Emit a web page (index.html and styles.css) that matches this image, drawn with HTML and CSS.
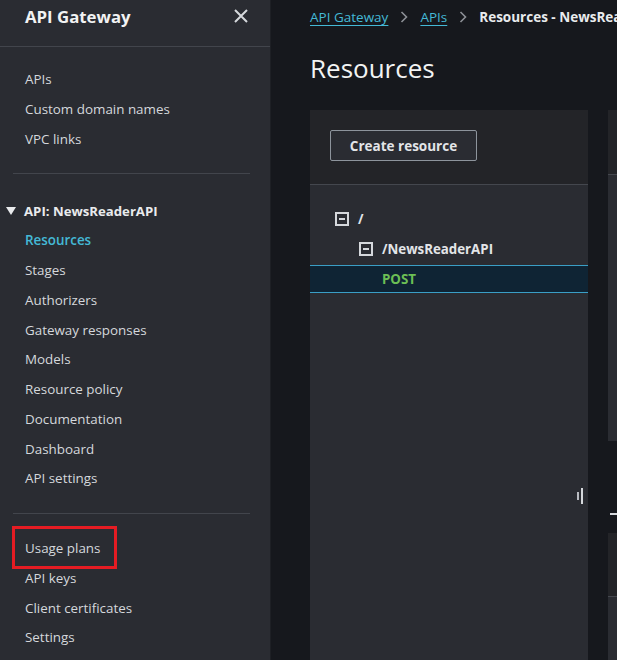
FILE: index.html
```html
<!DOCTYPE html>
<html>
<head>
<meta charset="utf-8">
<link rel="stylesheet" href="styles.css">
</head>
<body>
<aside class="sidebar">
  <div class="side-head">
    <span class="side-title">API Gateway</span>
    <svg class="close" width="14" height="14" viewBox="0 0 14 14"><path d="M1 1 L13 13 M13 1 L1 13" stroke="#d5d8dc" stroke-width="2" fill="none"/></svg>
  </div>
  <nav class="group first">
    <a class="item">APIs</a>
    <a class="item">Custom domain names</a>
    <a class="item">VPC links</a>
  </nav>
  <hr class="divider">
  <nav class="group api">
    <div class="api-title"><svg class="caret" width="10" height="8" viewBox="0 0 10 8"><path d="M0 0 H10 L5 8 Z" fill="#e9ebed"/></svg>API: NewsReaderAPI</div>
    <a class="item active">Resources</a>
    <a class="item">Stages</a>
    <a class="item">Authorizers</a>
    <a class="item">Gateway responses</a>
    <a class="item">Models</a>
    <a class="item">Resource policy</a>
    <a class="item">Documentation</a>
    <a class="item">Dashboard</a>
    <a class="item">API settings</a>
  </nav>
  <hr class="divider">
  <nav class="group last">
    <a class="item highlighted">Usage plans</a>
    <a class="item">API keys</a>
    <a class="item">Client certificates</a>
    <a class="item">Settings</a>
  </nav>
</aside>
<main class="main">
  <div class="crumbs">
    <a class="crumb-link">API Gateway</a>
    <svg class="chev" width="8" height="12" viewBox="0 0 8 12"><path d="M1.5 1 L6.5 6 L1.5 11" stroke="#8d9096" stroke-width="1.6" fill="none"/></svg>
    <a class="crumb-link">APIs</a>
    <svg class="chev" width="8" height="12" viewBox="0 0 8 12"><path d="M1.5 1 L6.5 6 L1.5 11" stroke="#8d9096" stroke-width="1.6" fill="none"/></svg>
    <span class="crumb-current">Resources - NewsReaderAPI</span>
  </div>
  <h1 class="title">Resources</h1>
  <div class="panels">
    <section class="panel tree-panel">
      <div class="panel-head">
        <button class="btn">Create resource</button>
      </div>
      <div class="tree">
        <div class="row lvl0"><span class="box"></span><span class="path">/</span></div>
        <div class="row lvl1"><span class="box"></span><span class="path">/NewsReaderAPI</span></div>
        <div class="row method selected"><span class="post">POST</span></div>
      </div>
      <div class="handle"><span class="h1"></span><span class="h2"></span></div>
    </section>
    <section class="right-col">
      <div class="panel details">
        <div class="details-head"></div>
      </div>
      <div class="tabs"><span class="tab-line"></span></div>
      <div class="panel lower">
        <div class="lower-head"></div>
      </div>
    </section>
  </div>
</main>
</body>
</html>
```
FILE: styles.css
```css
*, *::before, *::after { box-sizing: border-box; }
html, body { margin: 0; padding: 0; }
body {
  width: 617px;
  height: 660px;
  overflow: hidden;
  display: flex;
  background: #16181d;
  font-family: "Open Sans", "Noto Sans", sans-serif;
  color: #d5d8dc;
}
.sidebar {
  width: 271px;
  flex: none;
  background: #2a2c32;
  border-right: 1px solid #1e2025;
  display: flex;
  flex-direction: column;
}
.side-head {
  height: 47px;
  display: flex;
  align-items: center;
  justify-content: space-between;
  padding: 0 22px 0 25px;
  border-bottom: 1px solid #42454c;
}
.side-title {
  font-size: 16.8px;
  font-weight: 700;
  color: #f2f3f3;
  margin-top: -14px;
}
.close { margin-top: -14px; }
.group { display: flex; flex-direction: column; }
.item {
  display: block;
  height: 29.75px;
  line-height: 29.75px;
  padding-left: 25px;
  font-size: 13.4px;
  color: #d5d8dc;
}
.group.first { padding-top: 18px; padding-bottom: 19px; }
.divider {
  margin: 0 20px 0 13px;
  border: 0;
  border-top: 1px solid #42454c;
  height: 0;
}
.group.api { padding-top: 22px; padding-bottom: 19px; }
.api-title {
  height: 30px;
  line-height: 30px;
  font-size: 13.2px;
  font-weight: 700;
  color: #e9ebed;
  padding-left: 6px;
  display: flex;
  align-items: center;
}
.caret { margin-right: 8px; flex: none; }
.item.active { color: #44b9d6; font-weight: 600; }
.group.last { padding-top: 20px; }
.item.highlighted {
  position: relative;
}
.item.highlighted::after {
  content: "";
  position: absolute;
  left: 12px;
  top: -8px;
  width: 105px;
  height: 43px;
  border: 3px solid #e51c23;
}
.main {
  flex: 1;
  min-width: 0;
  padding-left: 39px;
  overflow: hidden;
}
.crumbs {
  height: 34px;
  display: flex;
  align-items: center;
  white-space: nowrap;
  font-size: 13.5px;
}
.crumb-link {
  color: #44b9d6;
  text-decoration: underline;
  text-underline-offset: 3px;
}
.chev { margin: 0 12px; flex: none; }
.crumb-current { font-weight: 700; color: #e9ebed; }
.title {
  margin: 0;
  height: 76px;
  padding-top: 16px;
  font-size: 26px;
  font-weight: 400;
  color: #f2f3f3;
  line-height: 36px;
}
.panels {
  display: flex;
  gap: 20px;
  width: 400px;
}
.panel { background: #2a2c32; }
.tree-panel {
  width: 278px;
  flex: none;
  height: 560px;
  position: relative;
}
.panel-head {
  height: 75px;
  background: #232428;
  border-bottom: 1px solid #44474e;
  padding: 20px 0 0 20px;
}
.btn {
  height: 31px;
  width: 147px;
  background: #2a2c32;
  border: 1.5px solid #8d949c;
  border-radius: 2px;
  color: #e3e5e8;
  font-family: "Open Sans", "Noto Sans", sans-serif;
  font-size: 13.5px;
  font-weight: 700;
  padding: 0;
}
.tree { padding-top: 19px; }
.row {
  height: 30px;
  display: flex;
  align-items: center;
  font-size: 13.3px;
  font-weight: 700;
  color: #e3e5e8;
}
.lvl0 { padding-left: 25px; }
.lvl1 { padding-left: 49px; }
.box {
  width: 14px;
  height: 14px;
  border: 2px solid #d5d8dc;
  position: relative;
  margin-right: 9px;
  flex: none;
}
.box::after {
  content: "";
  position: absolute;
  left: 2px;
  right: 2px;
  top: 4px;
  height: 2px;
  background: #d5d8dc;
}
.method {
  padding-left: 72px;
  margin-top: 1px;
  height: 28px;
}
.selected {
  background: #0f2434;
  border-top: 1px solid #3a9fc6;
  border-bottom: 1px solid #3a9fc6;
}
.post { color: #6cbf55; }
.handle {
  position: absolute;
  left: 267px;
  top: 378px;
  display: flex;
  align-items: center;
  gap: 2px;
}
.h1 { width: 2px; height: 8px; background: #b9bcc2; }
.h2 { width: 2px; height: 16px; background: #d5d8dc; }
.right-col {
  width: 100px;
  flex: none;
  display: flex;
  flex-direction: column;
}
.details { height: 331px; }
.details-head {
  height: 65px;
  background: #232428;
  border-bottom: 1px solid #44474e;
}
.tabs {
  height: 92px;
  position: relative;
}
.tab-line {
  position: absolute;
  left: 2px;
  top: 72px;
  width: 20px;
  height: 2px;
  background: #d5d8dc;
}
.lower { height: 200px; background: #2a2c32; }
.lower-head {
  height: 64px;
  background: #232428;
  border-bottom: 1px solid #44474e;
}
```
